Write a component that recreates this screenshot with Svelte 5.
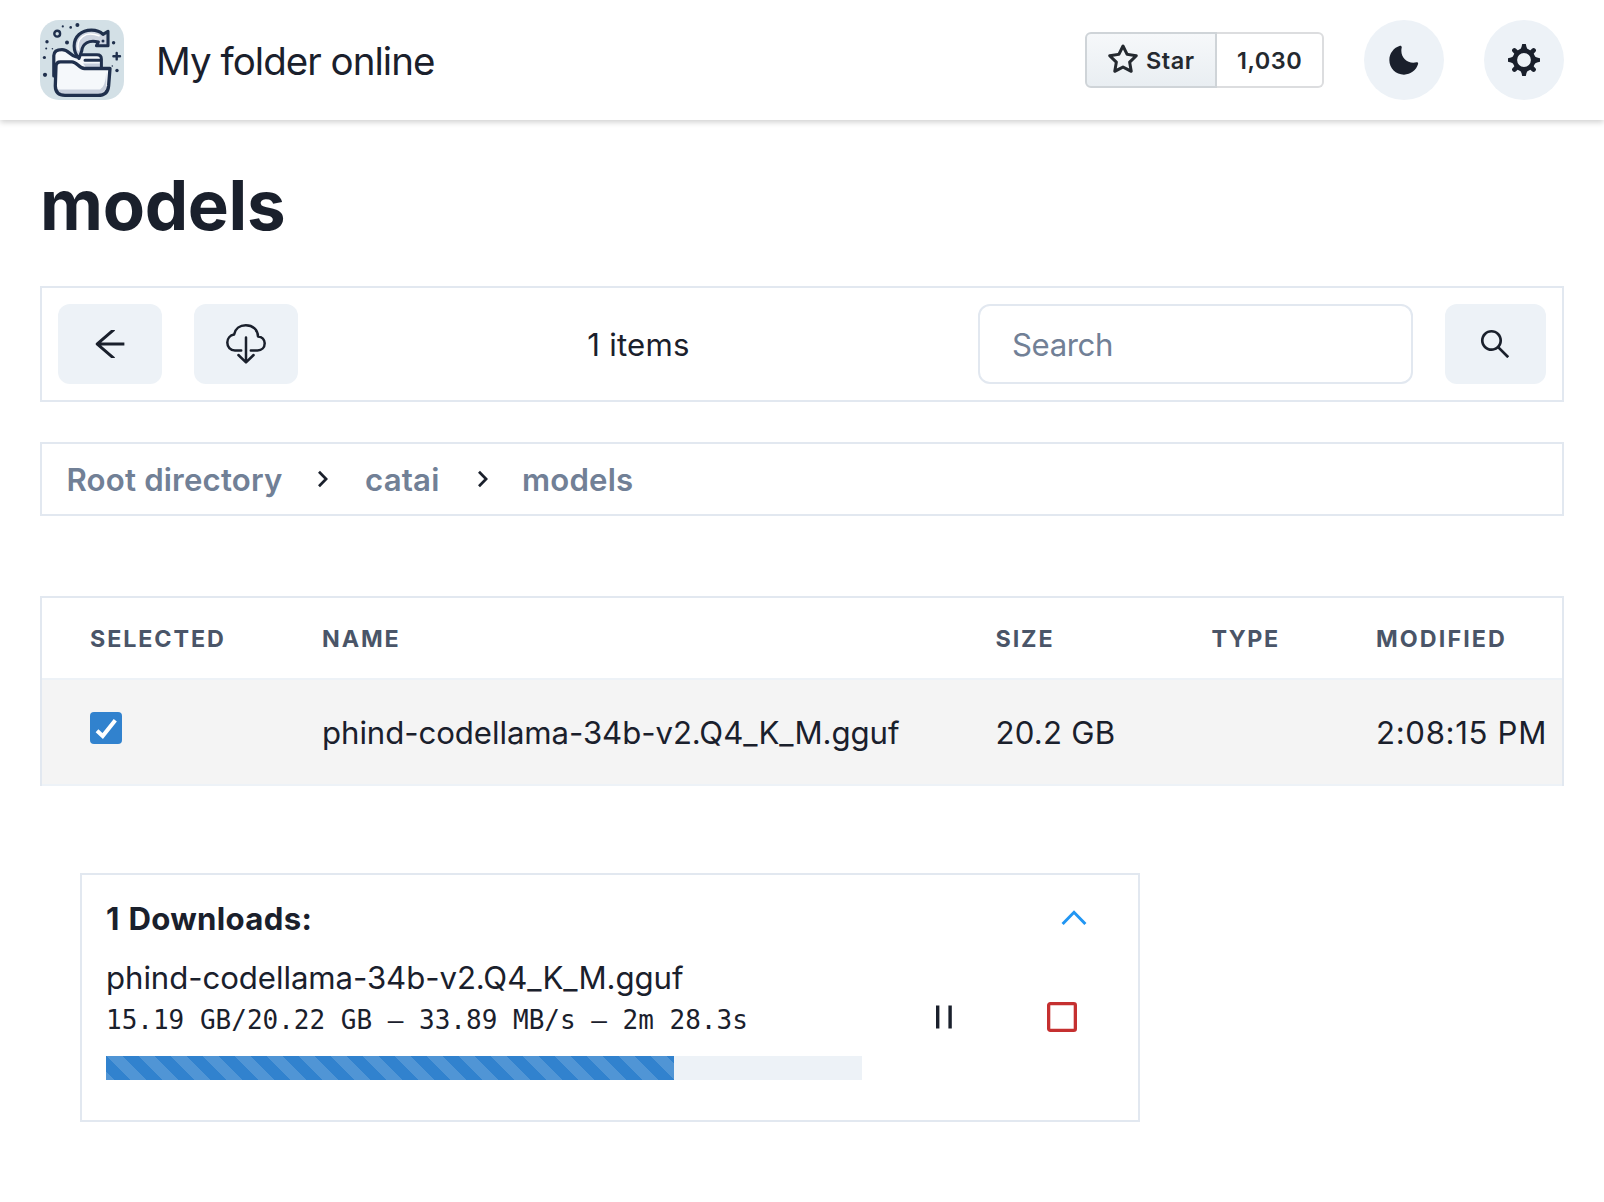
<script>
  const crumbs = ['Root directory', 'catai', 'models'];
  const files = [
    { name: 'phind-codellama-34b-v2.Q4_K_M.gguf', size: '20.2 GB', type: '', modified: '2:08:15 PM' }
  ];
  const progress = 75.13;
</script>

<header class="topbar">
  <svg class="logo" viewBox="0 0 84 80" fill="none" stroke="#20304d" stroke-linecap="round" stroke-linejoin="round">
    <rect width="84" height="80" rx="19" fill="#d3e0e6" stroke="none" />
    <g fill="#20304d" stroke="none">
      <circle cx="22.8" cy="6.4" r="1.1" /><circle cx="30.7" cy="7.4" r="1.3" /><circle cx="37.4" cy="5" r="2" />
      <circle cx="27" cy="22.6" r="2" /><circle cx="7" cy="21.7" r="1.7" /><circle cx="6.2" cy="28.4" r="1" />
      <circle cx="12.4" cy="28.7" r=".8" /><circle cx="4.4" cy="37.5" r="1.6" /><circle cx="5" cy="54.8" r="2.1" />
      <circle cx="73.6" cy="22.8" r="1.7" /><circle cx="77" cy="50.5" r="1.7" /><circle cx="72.3" cy="46" r=".8" />
    </g>
    <circle cx="17.2" cy="13.7" r="2.9" stroke-width="2.4" />
    <path d="M76.7 33v6.4M73.4 36.2h6.600" stroke-width="2.4" />
    <path d="M13.8 56V35.5C14 31.500 17.500 29.600 22 29.600C29 29.600 30 36 36.500 37L42 35H57.500Q61.500 35 61.500 39V48L44 50L16 46Z" fill="#f5f8fb" stroke="none" />
    <path d="M43 43.500h17v4h-14z" fill="#c5cddb" stroke="none" />
    <path d="M13.8 56V35.5C14 31.500 17.500 29.600 22 29.600C29 29.600 30 36 36.500 37" stroke-width="3.200" />
    <path d="M42 34.700H57Q61.400 34.700 61.400 39V47.500M45 40.200H59.500" stroke-width="3" />
    <path d="M39 38.500C32.500 31 32.500 20.500 39 14.500C45.500 9 57 8.500 63 14.300L68 11.300V25.700H56.500L58.300 22C49 19.500 42.500 23.500 41.700 31Z" fill="#cdd4e0" stroke-width="3.100" />
    <path d="M38.300 30C36 18.500 45 10.500 59 15.800" stroke="#fff" stroke-width="1.500" />
    <circle cx="63" cy="21" r="1.500" fill="#20304d" stroke="none" />
    <path d="M16 46Q16.200 41.800 20.500 41.800H32C37 41.800 39 48.500 44.500 48.500H70L68.600 66Q67.600 75.400 58 75.400H25Q15.500 75.400 15.300 66Z" fill="#f5f8fb" stroke="none" />
    <path d="M17 69.500H60Q65.500 67 66.300 52V68Q64 73.500 58 74H24Q18.500 74 17 69.500Z" fill="#c9d0dd" stroke="none" />
    <path d="M16 46Q16.200 41.800 20.500 41.800H32C37 41.800 39 48.500 44.500 48.500H70L68.600 66Q67.600 75.400 58 75.400H25Q15.500 75.400 15.300 66Z" stroke-width="3.300" />
  </svg>
  <span class="brand">My folder online</span>

  <div class="github">
    <a class="star" href="#star">
      <svg width="32" height="32" viewBox="0 0 16 16" fill="#24292f">
        <path d="M8 .25a.75.75 0 0 1 .673.418l1.882 3.815 4.21.612a.75.75 0 0 1 .416 1.279l-3.046 2.97.719 4.192a.751.751 0 0 1-1.088.791L8 12.347l-3.766 1.98a.75.75 0 0 1-1.088-.79l.72-4.194L.818 6.374a.75.75 0 0 1 .416-1.28l4.21-.611L7.327.668A.75.75 0 0 1 8 .25Zm0 2.445L6.615 5.500a.75.75 0 0 1-.564.41l-3.097.45 2.240 2.184a.75.75 0 0 1 .216.664l-.528 3.084 2.769-1.456a.75.75 0 0 1 .698 0l2.770 1.456-.530-3.084a.75.75 0 0 1 .216-.664l2.240-2.183-3.096-.45a.75.75 0 0 1-.564-.41L8 2.694Z" />
      </svg>
      <span>Star</span>
    </a>
    <a class="count" href="#stargazers">1,030</a>
  </div>

  <button class="round" aria-label="Dark mode">
    <svg width="32" height="32" viewBox="0 0 24 24" fill="#1a202c">
      <path d="M21.400 13.700C20.600 13.900 19.800 14 19 14c-5 0-9-4-9-9c0-0.800 0.100-1.600 0.300-2.400c0.100-0.300 0-0.700-0.300-1c-0.300-0.300-0.600-0.400-1-0.300C4.300 2.700 1 7.100 1 12c0 6.100 4.900 11 11 11c4.900 0 9.300-3.300 10.600-8.100c0.100-0.300 0-0.700-0.300-1C22.100 13.700 21.700 13.600 21.400 13.700z" />
    </svg>
  </button>
  <button class="round" aria-label="Settings">
    <svg width="32" height="32" viewBox="0 0 32 32" fill="#1a202c" stroke="#1a202c">
      <circle cx="16" cy="16" r="9.200" fill="none" stroke-width="4.600" />
      <path d="M6.400 6.400L9 9M25.600 6.400L23 9M6.400 25.600L9 23M25.600 25.600L23 23" stroke-width="4.600" stroke-linecap="round" />
      <path d="M14.200 0h3.600l.700 3 1.500 3h-8l1.500-3zM14.200 32h3.600l.700-3 1.500-3h-8l1.500 3zM0 14.200v3.600l3 .700 3 1.500v-8l-3 1.500zM32 14.200v3.600l-3 .700-3 1.500v-8l3 1.500z" stroke="none" />
    </svg>
  </button>
</header>

<main>
  <h1>models</h1>

  <section class="toolbar">
    <button class="tool" aria-label="Back">
      <svg width="40" height="40" viewBox="0 0 1024 1024" fill="#1a202c">
        <path d="M872 474H286.900l350.200-304c5.600-4.900 2.200-14-5.200-14h-88.500c-3.900 0-7.600 1.400-10.500 3.900L155 487.800a31.960 31.960 0 0 0 0 48.300L535.100 866c1.500 1.300 3.300 2 5.200 2h91.500c7.400 0 10.800-9.200 5.200-14L286.900 550H872c4.400 0 8-3.600 8-8v-60c0-4.400-3.600-8-8-8z" />
      </svg>
    </button>
    <button class="tool" aria-label="Download">
      <svg width="40" height="40" viewBox="0 0 40 40" fill="none" stroke="#1a202c" stroke-width="2.500" stroke-linecap="round" stroke-linejoin="round">
        <path d="M15.200 26.400H9C4.200 26.400 1.300 23 1.300 18.600C1.300 14.300 4.200 11.200 8.100 10.500C9.200 4.800 13.700 1.300 19.800 1.300C27 1.300 31.800 6 32 12.400C36 12.800 38.700 15.500 38.700 19.300C38.700 23.500 35.700 26.400 31.500 26.400H24.800" />
        <path d="M20 13.400V38M12.400 31L20 38.400L27.600 31" />
      </svg>
    </button>
    <span class="summary">1 items</span>
    <input class="search" type="text" placeholder="Search" />
    <button class="tool find" aria-label="Search">
      <svg width="36" height="36" viewBox="0 0 1024 1024" fill="#1a202c">
        <path d="M909.600 854.500L649.900 594.800C690.200 542.700 712 479 712 412c0-80.200-31.300-155.400-87.900-212.100-56.600-56.700-132-87.900-212.100-87.900s-155.500 31.300-212.100 87.900C143.200 256.500 112 331.800 112 412c0 80.100 31.300 155.500 87.900 212.100C256.500 680.800 331.800 712 412 712c67 0 130.600-21.800 182.700-62l259.700 259.600a8.200 8.200 0 0 0 11.600 0l43.600-43.500a8.200 8.200 0 0 0 0-11.600zM570.400 570.400C528 612.700 471.800 636 412 636s-116-23.300-158.400-65.600C211.300 528 188 471.800 188 412s23.300-116.100 65.600-158.400C296 211.300 352.200 188 412 188s116.100 23.200 158.400 65.600S636 352.200 636 412s-23.300 116.100-65.600 158.400z" />
      </svg>
    </button>
  </section>

  <nav class="crumbs">
    {#each crumbs as crumb, i}
      {#if i > 0}
        <svg class="sep" class:last={i === 2} width="12" height="18" viewBox="0 0 12 18" fill="none" stroke="#1a202c" stroke-width="2.700">
          <path d="M2 1.700L9.100 9L2 16.300" />
        </svg>
      {/if}
      <a href="#{crumb}">{crumb}</a>
    {/each}
  </nav>

  <section class="table">
    <div class="row head">
      <span>SELECTED</span><span>NAME</span><span>SIZE</span><span class="tight">TYPE</span><span class="wide">MODIFIED</span>
    </div>
    {#each files as file}
      <div class="row body">
        <span class="check">
          <svg width="32" height="32" viewBox="0 0 32 32" fill="none" stroke="#fff" stroke-width="4">
            <path d="M7 18.800L12.700 24L25.300 8.200" />
          </svg>
        </span>
        <span class="file">{file.name}</span>
        <span class="size">{file.size}</span>
        <span>{file.type}</span>
        <span class="time">{file.modified}</span>
      </div>
    {/each}
  </section>

  <section class="downloads">
    <div class="dl-head">
      <h2>1 Downloads:</h2>
      <svg width="28" height="16" viewBox="0 0 28 16" fill="none" stroke="#2196f3" stroke-width="3">
        <path d="M2.600 14L14 2.300L25.400 14" />
      </svg>
    </div>
    <div class="dl-body">
      <div class="dl-info">
        <div class="dl-name">phind-codellama-34b-v2.Q4_K_M.gguf</div>
        <div class="dl-stats">15.19 GB/20.22 GB – 33.89 MB/s – 2m 28.3s</div>
        <div class="track"><div class="fill" style="width: {progress}%"></div></div>
      </div>
      <svg class="pause" width="16" height="24" viewBox="0 0 16 24" fill="#1a202c">
        <rect x="0" y=".5" width="3.400" height="23" /><rect x="12.400" y=".5" width="3.400" height="23" />
      </svg>
      <svg class="stop" width="30" height="30" viewBox="0 0 30 30" fill="none" stroke="#c53030" stroke-width="3.300">
        <rect x="1.650" y="1.650" width="26.700" height="26.700" rx="1.600" />
      </svg>
    </div>
  </section>
</main>

<style>
  :global(body) {
    margin: 0;
    background: #fff;
    color: #1a202c;
    font-family: Inter, 'Liberation Sans', sans-serif;
  }

  svg { display: block; flex: none; }
  a { text-decoration: none; }
  button { border: 0; padding: 0; background: #edf2f7; display: flex; align-items: center; justify-content: center; flex: none; }

  .topbar {
    box-sizing: border-box;
    height: 120px;
    padding: 0 40px;
    display: flex;
    align-items: center;
    background: #fff;
    box-shadow: 0 2px 6px rgba(0, 0, 0, 0.2);
  }
  .logo { width: 84px; height: 80px; }
  .brand { margin-left: 32px; padding-top: 2px; font-size: 38.5px; line-height: 60px; letter-spacing: -0.97px; white-space: nowrap; }

  .github { display: flex; margin-left: auto; height: 56px; font-size: 23.5px; font-weight: 600; color: #24292f; }
  .github a { box-sizing: border-box; display: flex; align-items: center; color: inherit; border: 2px solid #dcdddf; }
  .github .star {
    width: 132px;
    padding-left: 20px;
    gap: 7px;
    letter-spacing: 0.5px;
    border-color: #cfd4d8;
    border-radius: 6px 0 0 6px;
    background: linear-gradient(180deg, #f6f8fa, #e9eef2);
  }
  .github .count { width: 107px; padding-left: 20px; letter-spacing: 0.5px; border-left: 0; border-radius: 0 6px 6px 0; }

  .round { width: 80px; height: 80px; margin-left: 40px; border-radius: 50%; }

  main { padding: 45px 40px 0; }
  h1 { margin: 0 0 41px; font-size: 69px; line-height: 80px; font-weight: 700; letter-spacing: -0.32px; }

  .toolbar {
    box-sizing: border-box;
    height: 116px;
    padding: 0 16px;
    display: flex;
    align-items: center;
    border: 2px solid #e2e8f0;
  }
  .tool { width: 104px; height: 80px; border-radius: 12px; }
  .tool + .tool { margin-left: 32px; }
  .find { width: 101px; margin-left: 32px; padding-right: 1px; box-sizing: border-box; }
  .summary { flex: 1; padding: 2px 0 0 1px; text-align: center; font-size: 31.2px; letter-spacing: 0.2px; }
  .search {
    box-sizing: border-box;
    width: 435px;
    height: 80px;
    padding: 2px 32px 0;
    border: 2px solid #e2e8f0;
    border-radius: 12px;
    background: #fff;
    font: 31.2px Inter, 'Liberation Sans', sans-serif;
    letter-spacing: -0.41px;
    outline: none;
  }
  .search::placeholder { color: #718096; opacity: 1; }

  .crumbs {
    box-sizing: border-box;
    height: 74px;
    margin-top: 40px;
    padding-left: 24.5px;
    display: flex;
    align-items: center;
    border: 2px solid #e2e8f0;
    font-size: 31.2px;
    font-weight: 600;
    letter-spacing: 0.17px;
  }
  .crumbs a { padding-top: 2px; color: #718096; }
  .sep { margin: 0 36.500px 0 34px; }
  .sep.last { margin: 0 33.500px 0 37px; }

  .table { margin-top: 80px; border: 2px solid #e2e8f0; border-bottom: 0; }
  .row {
    display: grid;
    grid-template-columns: 232px 673.500px 216px 164.500px 1fr;
    align-items: center;
    padding-left: 48px;
    border-bottom: 2px solid #edf2f7;
    white-space: nowrap;
  }
  .head { height: 80px; font-size: 23.3px; font-weight: 700; letter-spacing: 1.9px; color: #4a5568; }
  .head .tight { letter-spacing: 1.5px; }
  .head .wide { letter-spacing: 2.1px; }
  .body { height: 104px; background: #f4f4f4; font-size: 31.2px; }
  .body span { padding-top: 2px; }
  .body .check { width: 32px; height: 32px; padding: 0; margin-bottom: 8px; border-radius: 4px; background: #3182ce; }
  .file, .dl-name { letter-spacing: -0.08px; }
  .size { letter-spacing: 0.2px; }
  .time { letter-spacing: 0.65px; }

  .downloads {
    box-sizing: border-box;
    width: 1060px;
    height: 249px;
    margin: 87px 0 0 40px;
    padding: 20px 50px 0 24px;
    border: 2px solid #e2e8f0;
  }
  .dl-head { display: flex; align-items: center; justify-content: space-between; height: 46px; margin-bottom: 13px; }
  h2 { margin: 0; padding-top: 2px; font-size: 31.2px; font-weight: 700; letter-spacing: 0.3px; word-spacing: 1px; }
  .dl-body { display: flex; align-items: center; }
  .dl-info { width: 756px; white-space: nowrap; }
  .dl-name { font-size: 31.2px; line-height: 48px; }
  .dl-stats { font: 26px/36px 'DejaVu Sans Mono', monospace; }
  .track { height: 24px; margin-top: 18px; background: #edf2f7; }
  .fill {
    height: 100%;
    background-color: #3182ce;
    background-image: linear-gradient(45deg, rgba(255, 255, 255, 0.15) 25%, transparent 25%, transparent 50%, rgba(255, 255, 255, 0.15) 50%, rgba(255, 255, 255, 0.15) 75%, transparent 75%, transparent);
    background-size: 32px 32px;
  }
  .pause { margin-left: 74px; }
  .stop { margin-left: 95px; }
</style>
